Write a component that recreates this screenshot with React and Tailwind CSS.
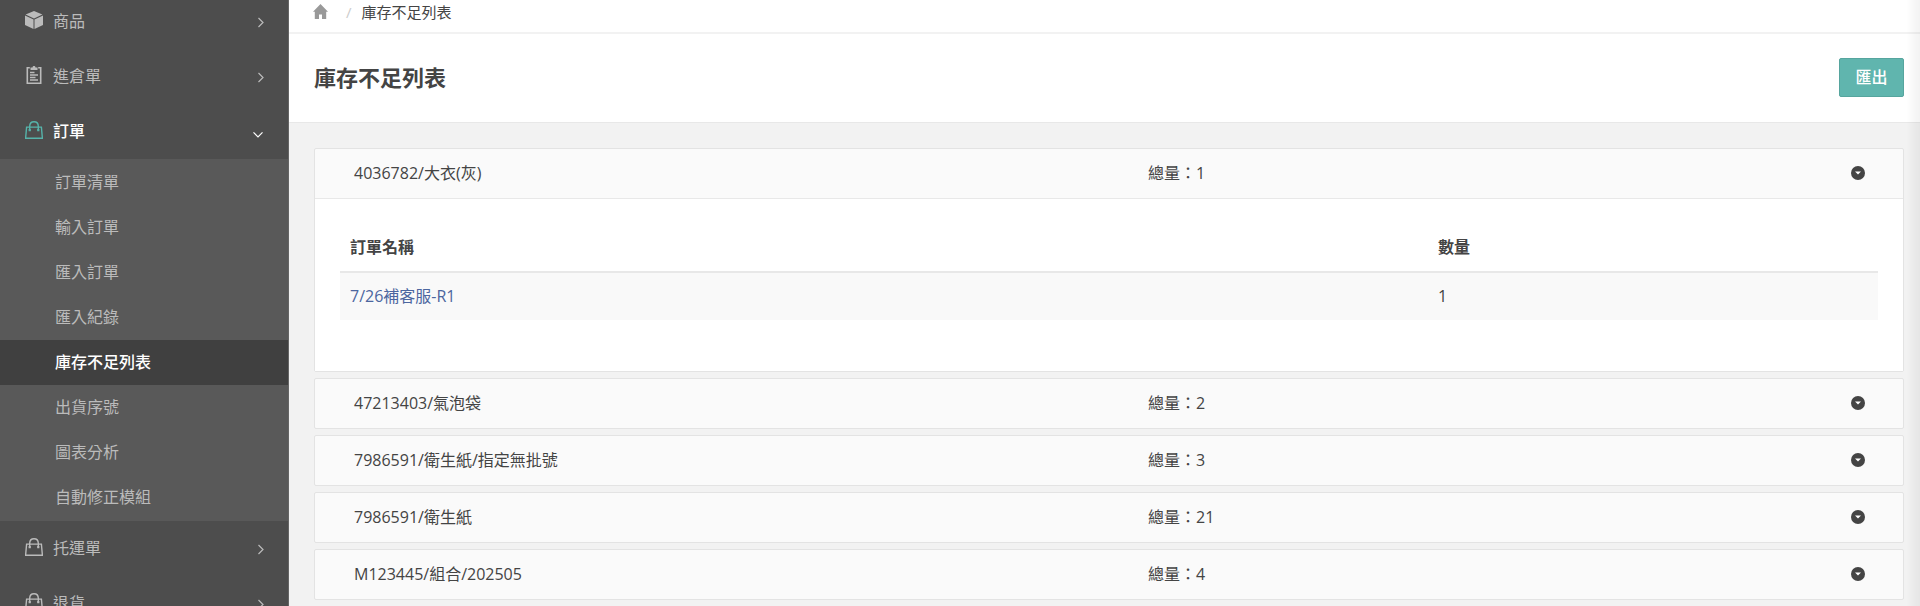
import React from 'react';

const CubeIcon = () => (
  <svg width="18" height="18" viewBox="0 0 18 18" fill="currentColor" aria-hidden="true">
    <path d="M9 0 17.4 3.6 9 7.4.6 3.6z" />
    <path d="M0 4.6 8.5 8.4V18L0 14z" />
    <path d="M18 4.6 9.5 8.4V18L18 14z" />
  </svg>
);

const ClipboardIcon = () => (
  <svg width="18" height="18" viewBox="0 0 18 18" fill="none" stroke="currentColor" strokeWidth="1.6" aria-hidden="true">
    <path d="M4.800 1.700H2.300v15.500h13.400V1.700h-2.500" />
    <path d="M5.500 4V1.600h2C7.700.4 8.200 0 9 0s1.300.4 1.500 1.600h2V4z" fill="currentColor" stroke="none" />
    <path d="M5 6.500h4.500M5 9h8M5 11.500h5.500M5 14h8" />
  </svg>
);

const BagIcon = () => (
  <svg width="18" height="18" viewBox="0 0 18 18" fill="none" stroke="currentColor" strokeWidth="1.4" aria-hidden="true">
    <path d="M1.600 6.100h14.800l1 11.200H.6z" />
    <path d="M4.700 9.800V5.200C4.700 2.400 6.500.7 9 .7s4.300 1.700 4.300 4.500v4.600" />
    <path d="M4.700 8v2.200M13.300 8v2.200" strokeWidth="2.200" />
  </svg>
);

const HomeIcon = () => (
  <svg width="15" height="15" viewBox="0 0 15 15" fill="currentColor" aria-hidden="true">
    <path d="M7.500 0 15 7.800h-1.800V15H9v-4.500H6V15H1.800V7.800H0z" />
  </svg>
);

const Chevron = ({ open }) => (
  <svg width="12" height="12" viewBox="0 0 12 12" fill="none" stroke="currentColor" strokeWidth="1.2" aria-hidden="true">
    <path d={open ? 'M.5 6.300 5 10.800 9.500 6.300' : 'M5.500 2 10 6.500 5.500 11'} />
  </svg>
);

const CircleCaret = () => (
  <svg width="14" height="14" viewBox="0 0 14 14" aria-hidden="true">
    <circle cx="7" cy="7" r="7" fill="#444" />
    <path d="M4 5.600h6L7 8.600z" fill="#fff" />
  </svg>
);

const menu = [
  { label: '商品', icon: CubeIcon },
  { label: '進倉單', icon: ClipboardIcon },
  {
    label: '訂單',
    icon: BagIcon,
    children: ['訂單清單', '輸入訂單', '匯入訂單', '匯入紀錄', '庫存不足列表', '出貨序號', '圖表分析', '自動修正模組'],
  },
  { label: '托運單', icon: BagIcon },
  { label: '退貨', icon: BagIcon },
];

const activePage = '庫存不足列表';

const shortages = [
  { name: '4036782/大衣(灰)', total: 1, orders: [{ name: '7/26補客服-R1', qty: 1 }] },
  { name: '47213403/氣泡袋', total: 2 },
  { name: '7986591/衛生紙/指定無批號', total: 3 },
  { name: '7986591/衛生紙', total: 21 },
  { name: 'M123445/組合/202505', total: 4 },
];

const Sidebar = () => (
  <nav className="w-[289px] shrink-0 border-r border-[#666] bg-[#4d4d4d] text-[#bbb]">
    {/* list is scrolled slightly past its first row */}
    <ul className="-mt-1.5">
      {menu.map(({ label, icon: Icon, children }) => (
        <li key={label}>
          <a href="#" className={`flex h-[55px] items-center pr-[23px] pl-[25px] ${children ? 'font-medium text-white' : ''}`}>
            <span className={`pb-1 ${children ? 'text-[#56b3aa]' : ''}`}>
              <Icon />
            </span>
            <span className="ml-2.5 flex-1 pb-0.5">{label}</span>
            <Chevron open={Boolean(children)} />
          </a>
          {children && (
            <ul className="bg-[#595959] py-px">
              {children.map((item) => (
                <li key={item}>
                  <a
                    href="#"
                    className={`flex h-[45px] items-center pb-0.5 pl-[55px] ${
                      item === activePage ? 'bg-[#404040] font-medium text-white' : ''
                    }`}
                  >
                    {item}
                  </a>
                </li>
              ))}
            </ul>
          )}
        </li>
      ))}
    </ul>
  </nav>
);

const OrderTable = ({ orders }) => (
  <div className="border-t border-[#e8e8e8] bg-white px-[25px] pt-[25px] pb-[51px]">
    <table className="w-full table-fixed text-left">
      <thead>
        <tr className="h-12 border-b-2 border-[#e8e8e8]">
          <th className="w-auto px-2.5 pb-0.5 font-semibold">訂單名稱</th>
          <th className="w-[450px] px-2.5 pb-0.5 font-semibold">數量</th>
        </tr>
      </thead>
      <tbody>
        {orders.map((order) => (
          <tr key={order.name} className="h-12 bg-[#f9f9f9]">
            <td className="px-2.5 pb-0.5">
              <a href="#" className="text-[#4c669f]">{order.name}</a>
            </td>
            <td className="px-2.5 pb-0.5">{order.qty}</td>
          </tr>
        ))}
      </tbody>
    </table>
  </div>
);

const ShortagePanel = ({ name, total, orders }) => (
  <section className="rounded-xs border border-[#e3e3e3] bg-[#fafafa]">
    <button type="button" aria-expanded={Boolean(orders)} className="grid h-[49px] w-full grid-cols-2 items-center pb-0.5 text-left">
      <span className="pl-[39px]">{name}</span>
      <span className="flex items-center justify-between pr-[38px] pl-[39px]">
        總量：{total}
        <CircleCaret />
      </span>
    </button>
    {orders && <OrderTable orders={orders} />}
  </section>
);

export default function App() {
  return (
    <div className="flex h-screen overflow-hidden bg-[#f2f2f2] font-['Open_Sans','Noto_Sans_CJK_TC',sans-serif] text-[16px] leading-6 text-[#444]">
      <Sidebar />
      <main className="min-w-0 flex-1">
        <div className="flex h-[34px] items-center border-b-2 border-[#f2f2f2] bg-white pb-2 pl-6 text-[15px]">
          <a href="#" aria-label="首頁" className="pb-0.5 text-[#999]">
            <HomeIcon />
          </a>
          <span className="ml-[18px] text-[#ccc]">/</span>
          <span className="ml-2.5">{activePage}</span>
        </div>
        <header className="flex h-[89px] items-center justify-between border-b border-[#e8e8e8] bg-white pr-4 pb-0.5 pl-[25px]">
          <h1 className="text-[22px] font-semibold">{activePage}</h1>
          <button type="button" className="h-[39px] w-[65px] rounded-xs border border-[#56a59e] bg-[#60b5ae] font-medium text-white">
            匯出
          </button>
        </header>
        <div className="flex flex-col gap-1.5 pt-[25px] pr-4 pl-[25px]">
          {shortages.map((item) => (
            <ShortagePanel key={item.name} {...item} />
          ))}
        </div>
      </main>
      <div className="pointer-events-none fixed inset-y-0 right-0 w-3.5 bg-linear-to-l from-black/5 to-transparent" />
    </div>
  );
}
